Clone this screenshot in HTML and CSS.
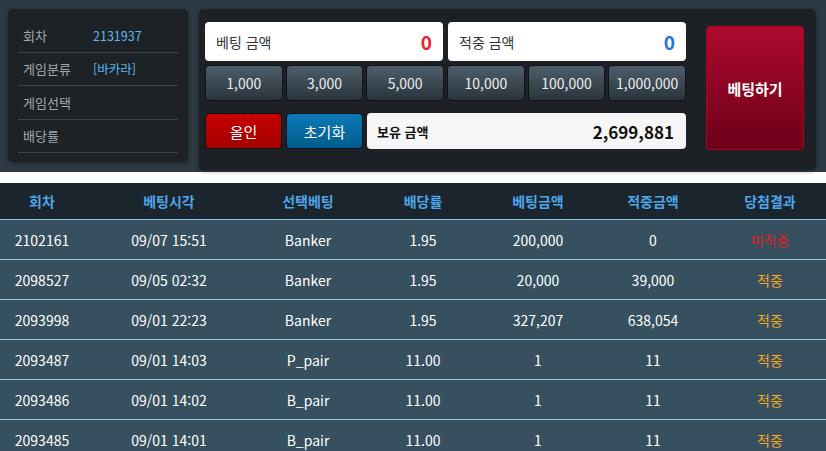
FILE: index.html
```html
<!DOCTYPE html>
<html lang="ko">
<head>
<meta charset="utf-8">
<link rel="stylesheet" href="styles.css">
</head>
<body>
<div class="top">
  <div class="info">
    <div class="info-row"><span class="lbl">회차</span><span class="val">2131937</span></div>
    <div class="info-row"><span class="lbl">게임분류</span><span class="val">[바카라]</span></div>
    <div class="info-row"><span class="lbl">게임선택</span><span class="val"></span></div>
    <div class="info-row"><span class="lbl">배당률</span><span class="val"></span></div>
  </div>
  <div class="bet">
    <div class="bet-main">
      <div class="amounts">
        <div class="amt"><span class="amt-lbl">베팅 금액</span><span class="amt-val red">0</span></div>
        <div class="amt"><span class="amt-lbl">적중 금액</span><span class="amt-val blue">0</span></div>
      </div>
      <div class="chips">
        <button class="chip">1,000</button>
        <button class="chip">3,000</button>
        <button class="chip">5,000</button>
        <button class="chip">10,000</button>
        <button class="chip">100,000</button>
        <button class="chip">1,000,000</button>
      </div>
      <div class="actions">
        <button class="act allin">올인</button>
        <button class="act reset">초기화</button>
        <div class="hold"><span class="hold-lbl">보유 금액</span><span class="hold-val">2,699,881</span></div>
      </div>
    </div>
    <button class="go">베팅하기</button>
  </div>
</div>
<div class="gap"></div>
<div class="table">
  <div class="tr th">
    <div>회차</div><div>베팅시각</div><div>선택베팅</div><div>배당률</div><div>베팅금액</div><div>적중금액</div><div>당첨결과</div>
  </div>
  <div class="tr">
    <div>2102161</div><div>09/07 15:51</div><div>Banker</div><div>1.95</div><div>200,000</div><div>0</div><div class="lose">미적중</div>
  </div>
  <div class="tr">
    <div>2098527</div><div>09/05 02:32</div><div>Banker</div><div>1.95</div><div>20,000</div><div>39,000</div><div class="win">적중</div>
  </div>
  <div class="tr">
    <div>2093998</div><div>09/01 22:23</div><div>Banker</div><div>1.95</div><div>327,207</div><div>638,054</div><div class="win">적중</div>
  </div>
  <div class="tr">
    <div>2093487</div><div>09/01 14:03</div><div>P_pair</div><div>11.00</div><div>1</div><div>11</div><div class="win">적중</div>
  </div>
  <div class="tr">
    <div>2093486</div><div>09/01 14:02</div><div>B_pair</div><div>11.00</div><div>1</div><div>11</div><div class="win">적중</div>
  </div>
  <div class="tr">
    <div>2093485</div><div>09/01 14:01</div><div>B_pair</div><div>11.00</div><div>1</div><div>11</div><div class="win">적중</div>
  </div>
</div>
</body>
</html>
```
FILE: styles.css
```css
* { box-sizing: border-box; }
html, body { margin: 0; padding: 0; background: #ffffff; }
body {
  font-family: "Noto Sans CJK KR", "Noto Sans", sans-serif;
  font-size: 14px;
  overflow: hidden;
  height: 451px;
}
button { font-family: inherit; cursor: pointer; }

.top {
  background: #2e3a43;
  height: 172px;
  display: flex;
  align-items: flex-start;
  gap: 11px;
  padding: 9px 10px 0 8px;
}

.info {
  width: 180px;
  height: 153px;
  background: #1d2226;
  border-radius: 5px;
  box-shadow: 0 1px 4px rgba(0,0,0,0.45);
  padding: 10px 10px 0;
}
.info-row {
  height: 33.5px;
  border-bottom: 1px solid #3b444b;
  display: flex;
  align-items: center;
  padding-left: 5px;
  font-size: 13px;
}
.lbl { width: 70px; color: #a2a8ad; }
.val { color: #5db6ee; font-size: 12.5px; }

.bet {
  flex: 1;
  height: 161px;
  background: #1d2125;
  border-radius: 5px;
  box-shadow: 0 1px 4px rgba(0,0,0,0.45);
  padding: 13px 12px 0 6px;
  display: flex;
  gap: 20px;
}
.bet-main {
  width: 481px;
  display: flex;
  flex-direction: column;
}
.amounts {
  display: flex;
  gap: 5px;
}
.amt {
  flex: 1;
  height: 39px;
  background: #ffffff;
  border-radius: 4px;
  display: flex;
  align-items: center;
  justify-content: space-between;
  padding: 0 11px 0 11px;
}
.amt-lbl { color: #333333; font-size: 14px; }
.amt-val { font-weight: 700; font-size: 19px; }
.red { color: #e5212b; }
.blue { color: #1b74e4; }

.chips {
  margin-top: 4px;
  display: grid;
  grid-template-columns: repeat(6, 1fr);
  gap: 3px;
}
.chip {
  height: 36px;
  border: 1px solid #101316;
  border-radius: 4px;
  background: linear-gradient(#4e5e6a, #2a343c);
  color: #e9eef2;
  font-size: 14px;
  padding: 0;
}

.actions {
  margin-top: 12px;
  display: flex;
  gap: 4px;
  height: 36px;
}
.act {
  width: 77px;
  height: 36px;
  border: 1px solid #101316;
  border-radius: 4px;
  color: #ffffff;
  font-size: 15px;
  padding: 0;
}
.allin { background: linear-gradient(#c70000, #a30000); }
.reset { background: linear-gradient(#0d7ab6, #005b8c); }
.hold {
  flex: 1;
  background: #f6f6f6;
  border-radius: 4px;
  display: flex;
  align-items: center;
  justify-content: space-between;
  padding: 0 12px 0 10px;
}
.hold-lbl { font-weight: 700; font-size: 13px; color: #111; }
.hold-val { font-weight: 700; font-size: 17px; color: #111; }

.go {
  margin-top: 4px;
  width: 98px;
  height: 124px;
  border: 1px solid #b2001e;
  border-radius: 4px;
  background: linear-gradient(#ad0a2d, #6c0019);
  color: #ffffff;
  font-weight: 700;
  font-size: 15px;
  padding: 0;
}

.gap { height: 11px; background: #ffffff; }

.table { width: 826px; }
.tr {
  display: grid;
  grid-template-columns: 84px 170px 108px 122px 108px 122px 112px;
  height: 40px;
  align-items: center;
  background: #36505f;
  color: #ffffff;
  border-top: 1px solid #8fc6e3;
  text-align: center;
}
.tr.th {
  height: 36px;
  background: #1b252d;
  color: #4ea6ea;
  font-weight: 700;
  border-top: none;
}
.lose { color: #e01f2a; }
.win { color: #f5a623; }
```
